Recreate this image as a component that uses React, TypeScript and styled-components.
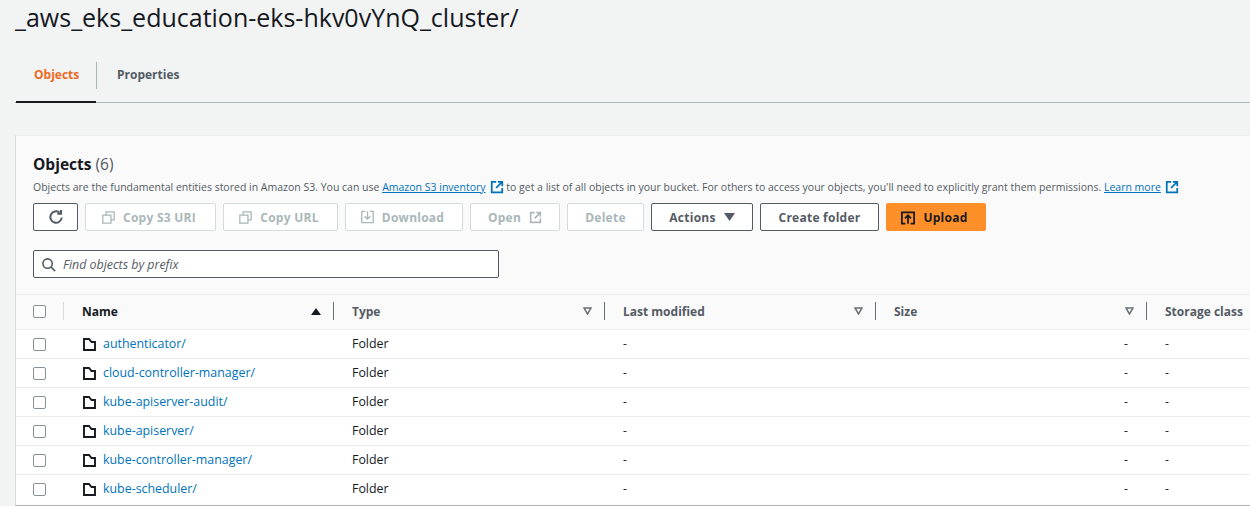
import React from 'react';
import styled, { createGlobalStyle } from 'styled-components';

const GlobalStyle = createGlobalStyle`
  html, body {
    margin: 0;
    padding: 0;
    width: 1250px;
    height: 506px;
    overflow: hidden;
    background: #f2f3f3;
    font-family: 'Open Sans', 'Noto Sans', sans-serif;
    color: #16191f;
  }
`;

const Page = styled.div`
  width: 1250px;
  height: 506px;
  overflow: hidden;
  box-sizing: border-box;
  padding-left: 15px;
`;

const Title = styled.h1`
  margin: 0;
  height: 42px;
  font-size: 25px;
  line-height: 35px;
  font-weight: 400;
  white-space: nowrap;
  color: #16191f;
`;

const Tabs = styled.div`
  display: flex;
  align-items: stretch;
  height: 60px;
  border-bottom: 1px solid #aab7b8;
  margin-bottom: 32px;
`;

const Tab = styled.div<{ $active?: boolean; $width: number }>`
  position: relative;
  width: ${p => p.$width}px;
  box-sizing: border-box;
  padding: 24px 0 0 ${p => (p.$active ? 19 : 20)}px;
  font-size: 12px;
  line-height: 18px;
  font-weight: 700;
  color: ${p => (p.$active ? '#ec6a1f' : '#545b64')};
  ${p =>
    p.$active
      ? `
    &::before {
      content: '';
      position: absolute;
      right: 0;
      top: 20px;
      height: 27px;
      width: 1px;
      background: #aab7b8;
    }
    &::after {
      content: '';
      position: absolute;
      left: 1px;
      right: 1px;
      bottom: -1px;
      height: 2px;
      background: #16191f;
    }
  `
      : ''}
`;

const Card = styled.section`
  width: 1260px;
  height: 371px;
  box-sizing: border-box;
  background: #fafafa;
  border-top: 1px solid #eaeded;
  border-left: 1px solid #d5dbdb;
  border-bottom: 1px solid #aab7b8;
  overflow: hidden;
`;

const CardHeader = styled.div`
  padding: 18px 0 0 17px;
  height: 158px;
  box-sizing: border-box;
`;

const Heading = styled.h2`
  margin: 0;
  font-size: 15.5px;
  line-height: 20px;
  font-weight: 700;
  color: #16191f;

  span {
    font-weight: 400;
    color: #545b64;
  }
`;

const Description = styled.p`
  margin: 5px 0 0;
  font-size: 10.5px;
  line-height: 16px;
  color: #545b64;
  white-space: nowrap;
`;

const DocLink = styled.a`
  color: #0073bb;
  text-decoration: underline;
  display: inline-flex;
  align-items: center;
  gap: 4px;
  vertical-align: top;

  svg {
    width: 14px;
    height: 14px;
  }
`;

const Toolbar = styled.div`
  display: flex;
  gap: 7px;
  margin-top: 8px;
`;

type ButtonKind = 'normal' | 'disabled' | 'primary';

const buttonColors: Record<ButtonKind, string> = {
  normal: 'background:#fff;border:1px solid #545b64;color:#545b64;',
  disabled: 'background:#fff;border:1px solid #d5dbdb;color:#aab7b8;',
  primary: 'background:#ff9029;border:1px solid #ff9029;color:#16191f;',
};

const ToolButton = styled.div<{ $kind: ButtonKind; $width: number; $lead?: boolean }>`
  width: ${p => p.$width}px;
  height: 28px;
  box-sizing: border-box;
  padding-right: ${p => (p.$lead ? 3 : 0)}px;
  border-radius: 2px;
  display: flex;
  align-items: center;
  justify-content: center;
  gap: 8px;
  font-size: 12px;
  font-weight: 700;
  letter-spacing: 0.25px;
  white-space: nowrap;
  ${p => buttonColors[p.$kind]}

  svg {
    flex: none;
  }
`;

const SearchBox = styled.div`
  width: 466px;
  height: 28px;
  box-sizing: border-box;
  margin-top: 19px;
  background: #fff;
  border: 1px solid #545b64;
  border-radius: 2px;
  display: flex;
  align-items: center;
  gap: 7px;
  padding-left: 7px;
  font-size: 12.4px;
  font-style: italic;
  color: #545b64;
`;

const HeadRow = styled.div`
  display: grid;
  grid-template-columns: 48px 270px 271px 271px 271px 1fr;
  height: 36px;
  box-sizing: border-box;
  border-top: 1px solid #eaeded;
  border-bottom: 1px solid #eaeded;
  background: #fafafa;
`;

const HeadCell = styled.div<{ $faint?: boolean; $end?: boolean }>`
  position: relative;
  display: flex;
  align-items: center;
  justify-content: ${p => (p.$end ? 'flex-start' : 'space-between')};
  padding: 0 13px 2px 18px;
  font-size: 12px;
  font-weight: 700;
  color: #545b64;
  white-space: nowrap;

  &::after {
    content: '';
    display: ${p => (p.$end ? 'none' : 'block')};
    position: absolute;
    right: 0;
    top: 7px;
    height: 18px;
    width: 1px;
    background: ${p => (p.$faint ? '#d5dbdb' : '#687078')};
  }
`;

const NameLabel = styled.span`
  color: #16191f;
`;

const CheckCell = styled(HeadCell)`
  justify-content: flex-start;
  padding: 0 0 1px 17px;
`;

const CheckBox = styled.span`
  display: block;
  width: 13px;
  height: 13px;
  box-sizing: border-box;
  border: 1px solid #879196;
  border-radius: 2px;
  background: #fff;
`;

const Row = styled.div`
  display: grid;
  grid-template-columns: 48px 270px 271px 271px 271px 1fr;
  height: 29px;
  box-sizing: border-box;
  background: #fff;
  border-bottom: 1px solid #eaeded;
  font-size: 12.4px;
  color: #16191f;

  &:last-child {
    border-bottom-color: #fff;
  }
`;

const Cell = styled.div<{ $right?: boolean }>`
  display: flex;
  align-items: center;
  padding: 0 ${p => (p.$right ? '19px' : '0')} 1px ${p => (p.$right ? '0' : '18px')};
  justify-content: ${p => (p.$right ? 'flex-end' : 'flex-start')};
  white-space: nowrap;
`;

const RowCheck = styled(Cell)`
  padding-left: 17px;
  padding-bottom: 0;
`;

const NameCell = styled(Cell)`
  gap: 7px;
  padding-left: 19px;

  svg {
    margin-top: 1px;
  }
`;

const FolderLink = styled.a`
  color: #0073bb;
`;

const Dash = styled.span`
  display: inline-block;
  will-change: transform;
`;

const ExternalIcon = ({ color = '#0073bb', size = 14 }: { color?: string; size?: number }) => (
  <svg width={size} height={size} viewBox="0 0 16 16" fill="none" stroke={color} strokeWidth="2">
    <path d="M7 2H2v12h12V9" />
    <path d="M9 2h5v5M14 2 7 9" />
  </svg>
);

const CopyIcon = () => (
  <svg width="13" height="13" viewBox="0 0 16 16" fill="none" stroke="#aab7b8" strokeWidth="1.6">
    <path d="M1 5h10v10H1z" />
    <path d="M5 5V1h10v10h-4" />
  </svg>
);

const DownloadIcon = () => (
  <svg width="13" height="14" viewBox="0 0 16 16" fill="none" stroke="#aab7b8" strokeWidth="1.6">
    <path d="M5 1H1v14h14V1h-4" />
    <path d="M8 1v9M4.5 7 8 10.5 11.5 7" />
  </svg>
);

const RefreshIcon = () => (
  <svg width="16" height="16" viewBox="0 0 16 16" fill="none" stroke="#545b64" strokeWidth="2">
    <path d="M13.7 8.5A5.7 5.7 0 1 1 11.5 3.5" />
    <path d="M13 1v3.700H9.300" />
  </svg>
);

const UploadIcon = () => (
  <svg width="14" height="15" viewBox="0 0 16 16" fill="none" stroke="#16191f" strokeWidth="2">
    <path d="M5 15H1V2h14v13h-4" />
    <path d="M8 15V6M4.500 9 8 5.500 11.500 9" />
  </svg>
);

const SearchIcon = () => (
  <svg width="15" height="15" viewBox="0 0 16 16" fill="none" stroke="#545b64" strokeWidth="1.7">
    <circle cx="7" cy="7" r="5" />
    <path d="m10.500 10.500 4.500 4.500" />
  </svg>
);

const CaretDown = () => (
  <svg width="11" height="8" viewBox="0 0 11 8" fill="#545b64">
    <path d="M0 0h11L5.500 8z" />
  </svg>
);

const SortUp = () => (
  <svg width="10" height="7" viewBox="0 0 10 7" fill="#16191f">
    <path d="M5 0l5 7H0z" />
  </svg>
);

const SortIdle = () => (
  <svg width="9" height="8" viewBox="0 0 9 8" fill="none" stroke="#687078" strokeWidth="1.5">
    <path d="M1 1h7L4.500 7z" />
  </svg>
);

const FolderIcon = () => (
  <svg width="13" height="13" viewBox="0 0 13 13" fill="none" stroke="#16191f" strokeWidth="1.9">
    <path d="M1 1h5l2.500 3H12v8H1z" />
  </svg>
);

const folders = [
  'authenticator/',
  'cloud-controller-manager/',
  'kube-apiserver-audit/',
  'kube-apiserver/',
  'kube-controller-manager/',
  'kube-scheduler/',
];

const App = () => (
  <>
    <GlobalStyle />
    <Page>
      <Title>_aws_eks_education-eks-hkv0vYnQ_cluster/</Title>
      <Tabs>
        <Tab $active $width={82}>
          Objects
        </Tab>
        <Tab $width={120}>Properties</Tab>
      </Tabs>
      <Card>
        <CardHeader>
          <Heading>
            Objects <span>(6)</span>
          </Heading>
          <Description>
            Objects are the fundamental entities stored in Amazon S3. You can use{' '}
            <DocLink>
              Amazon S3 inventory <ExternalIcon />
            </DocLink>{' '}
            to get a list of all objects in your bucket. For others to access your objects, you'll
            need to explicitly grant them permissions.{' '}
            <DocLink>
              Learn more <ExternalIcon />
            </DocLink>
          </Description>
          <Toolbar>
            <ToolButton $kind="normal" $width={45}>
              <RefreshIcon />
            </ToolButton>
            <ToolButton $kind="disabled" $width={131} $lead>
              <CopyIcon />
              Copy S3 URI
            </ToolButton>
            <ToolButton $kind="disabled" $width={115} $lead>
              <CopyIcon />
              Copy URL
            </ToolButton>
            <ToolButton $kind="disabled" $width={118} $lead>
              <DownloadIcon />
              Download
            </ToolButton>
            <ToolButton $kind="disabled" $width={90}>
              Open
              <ExternalIcon color="#aab7b8" size={13} />
            </ToolButton>
            <ToolButton $kind="disabled" $width={77}>
              Delete
            </ToolButton>
            <ToolButton $kind="normal" $width={102}>
              Actions
              <CaretDown />
            </ToolButton>
            <ToolButton $kind="normal" $width={119}>
              Create folder
            </ToolButton>
            <ToolButton $kind="primary" $width={100} $lead>
              <UploadIcon />
              Upload
            </ToolButton>
          </Toolbar>
          <SearchBox>
            <SearchIcon />
            Find objects by prefix
          </SearchBox>
        </CardHeader>
        <HeadRow>
          <CheckCell $faint>
            <CheckBox />
          </CheckCell>
          <HeadCell>
            <NameLabel>Name</NameLabel>
            <SortUp />
          </HeadCell>
          <HeadCell>
            Type
            <SortIdle />
          </HeadCell>
          <HeadCell>
            Last modified
            <SortIdle />
          </HeadCell>
          <HeadCell>
            Size
            <SortIdle />
          </HeadCell>
          <HeadCell $end>Storage class</HeadCell>
        </HeadRow>
        {folders.map(name => (
          <Row key={name}>
            <RowCheck>
              <CheckBox />
            </RowCheck>
            <NameCell>
              <FolderIcon />
              <FolderLink>{name}</FolderLink>
            </NameCell>
            <Cell>Folder</Cell>
            <Cell>
              <Dash>-</Dash>
            </Cell>
            <Cell $right>
              <Dash>-</Dash>
            </Cell>
            <Cell>
              <Dash>-</Dash>
            </Cell>
          </Row>
        ))}
      </Card>
    </Page>
  </>
);

export default App;
